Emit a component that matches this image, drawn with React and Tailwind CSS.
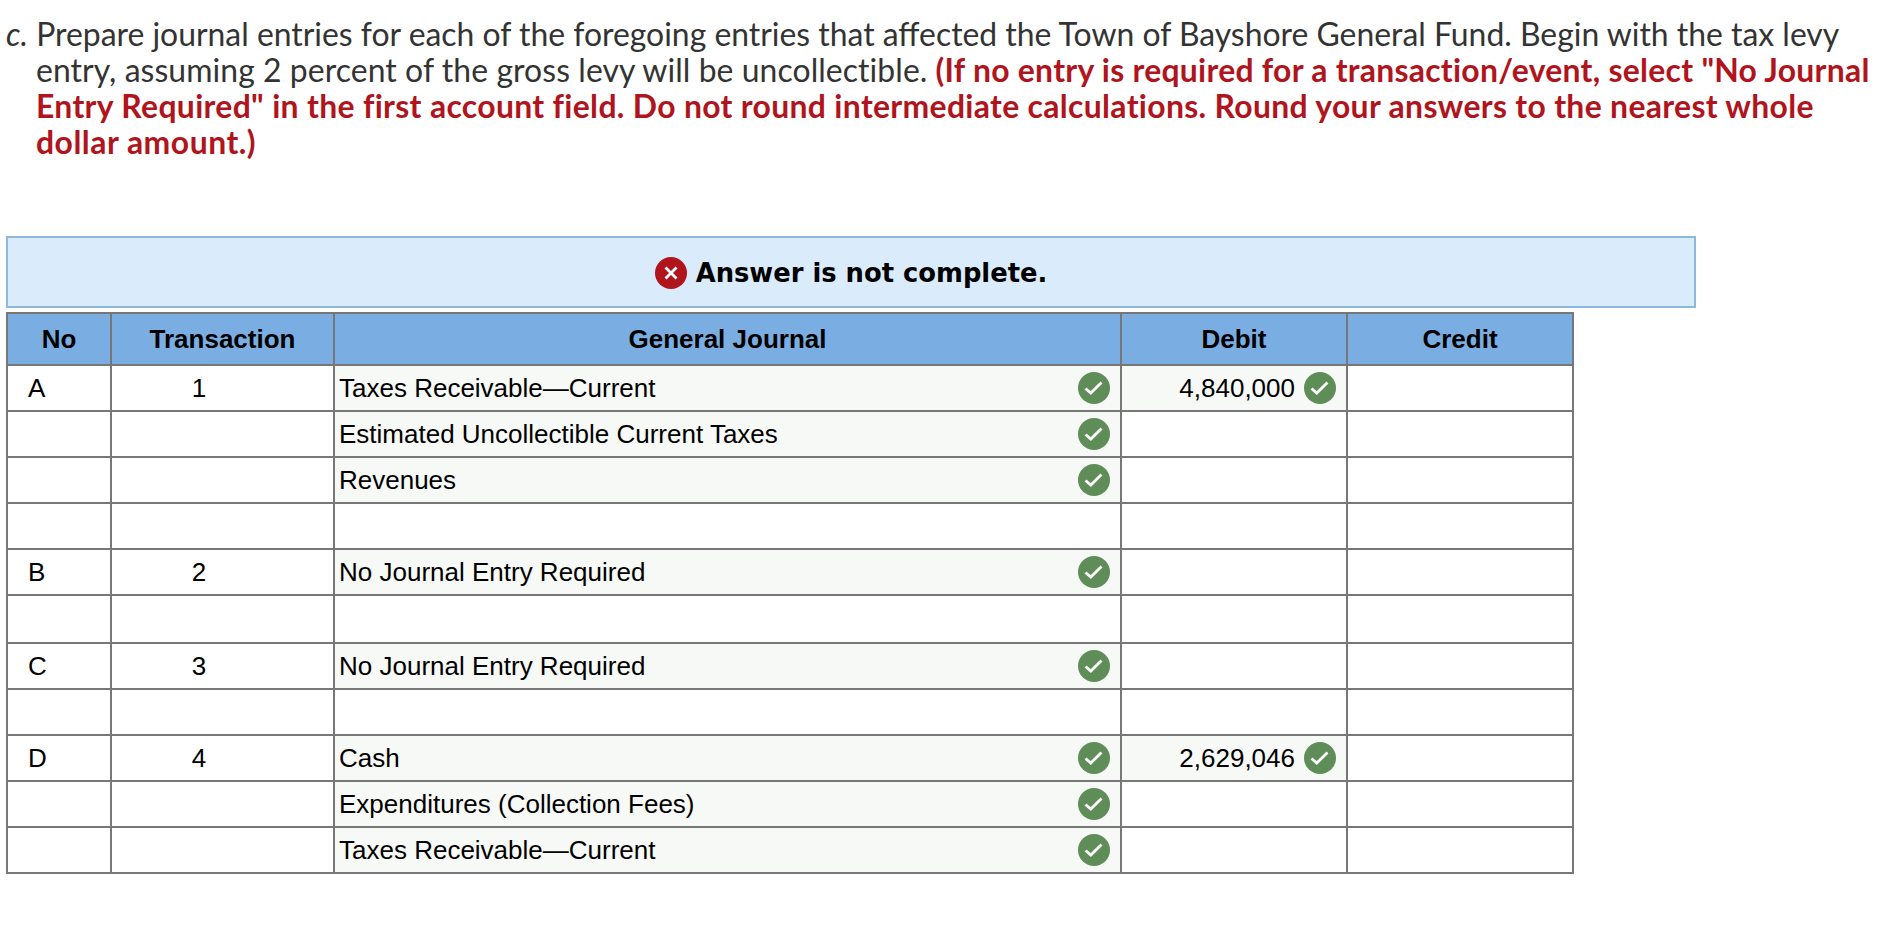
const ROWS = [
  { no: "A", tx: "1", account: "Taxes Receivable—Current", debit: "4,840,000" },
  { account: "Estimated Uncollectible Current Taxes" },
  { account: "Revenues" },
  {},
  { no: "B", tx: "2", account: "No Journal Entry Required" },
  { tall: true },
  { no: "C", tx: "3", account: "No Journal Entry Required" },
  {},
  { no: "D", tx: "4", account: "Cash", debit: "2,629,046" },
  { account: "Expenditures (Collection Fees)" },
  { account: "Taxes Receivable—Current" },
];

const CheckIcon = () => (
  <svg width="32" height="32" viewBox="0 0 32 32" className="shrink-0">
    <circle cx="16" cy="16" r="16" fill="#5f8d58" />
    <path d="M7.5 16.5 L12.8 21 L23.5 10.5" fill="none" stroke="#fff" strokeWidth="2.8" />
  </svg>
);

const CrossIcon = () => (
  <svg width="32" height="32" viewBox="0 0 32 32" className="shrink-0">
    <circle cx="16" cy="16" r="16" fill="#b0141c" />
    <path d="M10.5 10.5 L21.5 21.5 M21.5 10.5 L10.5 21.5" fill="none" stroke="#fff" strokeWidth="2.8" />
  </svg>
);

const App = () => {
  return (
    <div className="min-h-[936px] bg-white pl-[6px] pt-4">
      <p className="pl-[30px] -indent-[30px] w-[1882px] font-['Lato',sans-serif] text-[31.9px] leading-[36px] text-[#333]">
        <i>c.</i> Prepare journal entries for each of the foregoing entries that affected the Town of Bayshore General
        Fund. Begin with the tax levy
        <br />
        <span className="tracking-[0.08px]">entry, assuming 2 percent of the gross levy will be uncollectible.</span>{" "}
        <b className="text-[#b0141c]">
          <span className="tracking-[0.27px]">(If no entry is required for a transaction/event, select "No Journal</span>
          <br />
          <span className="tracking-[0.33px]">
            Entry Required" in the first account field. Do not round intermediate calculations. Round your answers to
            the nearest whole
          </span>
          <br />
          <span className="tracking-[0.5px]">dollar amount.)</span>
        </b>
      </p>

      <div className="mt-[76px] flex h-[72px] w-[1690px] items-center justify-center gap-[9px] border-2 border-[#8eb9de] bg-[#daecfb] pt-[2px]">
        <CrossIcon />
        <span className="font-['DejaVu_Sans',sans-serif] text-[25.8px] font-bold text-black">Answer is not complete.</span>
      </div>

      <table className="mt-1 w-[1566px] table-fixed border-collapse font-['Liberation_Sans',sans-serif] text-[26px] text-black">
        <colgroup>
          <col className="w-[104px]" />
          <col className="w-[223px]" />
          <col className="w-[787px]" />
          <col className="w-[226px]" />
          <col className="w-[226px]" />
        </colgroup>
        <thead>
          <tr className="h-[52px] bg-[#7aaee3]">
            {["No", "Transaction", "General Journal", "Debit", "Credit"].map((title) => (
              <th key={title} className="border-2 border-[#777] p-0 text-center font-bold">
                {title}
              </th>
            ))}
          </tr>
        </thead>
        <tbody>
          {ROWS.map((row, index) => (
            <tr key={index} className={row.tall ? "h-[48px]" : "h-[46px]"}>
              <td className="border-2 border-[#777] p-0 pl-5">{row.no}</td>
              <td className="border-2 border-[#777] p-0 pr-[47px] text-center">{row.tx}</td>
              <td className={`border-2 border-[#777] p-0 ${row.account ? "bg-[#f7f9f6]" : ""}`}>
                {row.account && (
                  <div className="flex items-center justify-between pl-[4px] pr-[10px]">
                    <span>{row.account}</span>
                    <CheckIcon />
                  </div>
                )}
              </td>
              <td className={`border-2 border-[#777] p-0 ${row.debit ? "bg-[#f7f9f6]" : ""}`}>
                {row.debit && (
                  <div className="flex items-center justify-end gap-[9px] pr-[10px]">
                    <span>{row.debit}</span>
                    <CheckIcon />
                  </div>
                )}
              </td>
              <td className="border-2 border-[#777] p-0" />
            </tr>
          ))}
        </tbody>
      </table>
    </div>
  );
};

export default App;
